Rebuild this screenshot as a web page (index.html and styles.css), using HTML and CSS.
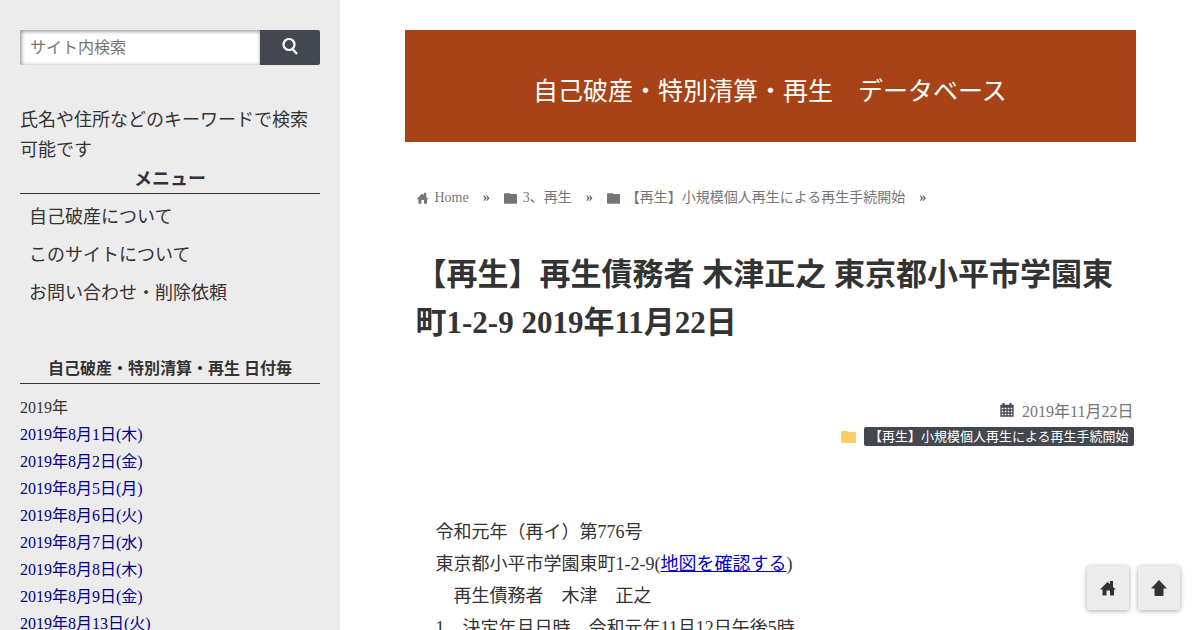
FILE: index.html
```html
<!DOCTYPE html>
<html lang="ja">
    <head>
      <meta charset="utf-8">
      <meta name="viewport" content="width=device-width, initial-scale=1">
      <title>【再生】再生債務者 木津正之</title>
      <link rel="stylesheet" href="styles.css">
    </head>
    <body>
        <svg class="sprite" aria-hidden="true">
            <symbol id="icon-home" viewBox="0 0 16 16"><path d="M7.500 2L10 4V1h3v6l3 2.500H14V15q0 .5-.5.5H10V10.500H6.500v5H3q-.5 0-.5-.5V9.500H0z"/></symbol>
            <symbol id="icon-folder" viewBox="0 0 16 14"><path d="M1 1h6l1 1h7q1 0 1 1v10q0 1-1 1H1q-1 0-1-1V2q0-1 1-1z"/></symbol>
        </svg>
        <div class="wrapper">
            <aside class="sidebar">
                <form class="search">
                    <input type="text" class="search-text" placeholder="サイト内検索" aria-label="サイト内検索">
                    <button type="submit" class="search-btn" aria-label="検索">
                        <svg viewBox="0 0 16 17"><circle cx="7" cy="6.500" r="5.500"/><path d="M10.500 11l4.500 5"/></svg>
                    </button>
                </form>
                <p class="search-note">氏名や住所などのキーワードで検索可能です</p>
                <h2 class="side-title">メニュー</h2>
                <ul class="menu">
                    <li><a href="#">自己破産について</a></li>
                    <li><a href="#">このサイトについて</a></li>
                    <li><a href="#">お問い合わせ・削除依頼</a></li>
                </ul>
                <h2 class="side-title small">自己破産・特別清算・再生 日付毎</h2>
                <p class="year">2019年</p>
                <ul class="days">
                    <li><a href="#">2019年8月1日(木)</a></li>
                    <li><a href="#">2019年8月2日(金)</a></li>
                    <li><a href="#">2019年8月5日(月)</a></li>
                    <li><a href="#">2019年8月6日(火)</a></li>
                    <li><a href="#">2019年8月7日(水)</a></li>
                    <li><a href="#">2019年8月8日(木)</a></li>
                    <li><a href="#">2019年8月9日(金)</a></li>
                    <li><a href="#">2019年8月13日(火)</a></li>
                </ul>
            </aside>
            <main class="main">
                <header class="site-header">
                    <a href="#">自己破産・特別清算・再生　データベース</a>
                </header>
                <article class="article">
                    <nav class="breadcrumb">
                        <a href="#"><svg><use href="#icon-home"/></svg>Home</a>
                        <span>»</span>
                        <a href="#"><svg><use href="#icon-folder"/></svg>3、再生</a>
                        <span>»</span>
                        <a href="#"><svg><use href="#icon-folder"/></svg>【再生】小規模個人再生による再生手続開始</a>
                        <span>»</span>
                    </nav>
                    <h1 class="title">【再生】再生債務者 木津正之 東京都小平市学園東町1-2-9 2019年11月22日</h1>
                    <div class="meta">
                        <div class="date">
                            <svg class="calendar" viewBox="0 0 14 14"><path d="M3.500 0v4M10.500 0v4" stroke-width="2"/><path d="M1 2.500h12v10.500H1zM1 4h12M1 7h12M1 10h12M4 4v9M7 4v9M10 4v9"/></svg>
                            <time datetime="2019-11-22">2019年11月22日</time>
                        </div>
                        <div class="category">
                            <svg class="folder"><use href="#icon-folder"/></svg>
                            <a href="#">【再生】小規模個人再生による再生手続開始</a>
                        </div>
                    </div>
                    <div class="content">
                        令和元年（再イ）第776号<br>
                        東京都小平市学園東町1-2-9(<a href="#">地図を確認する</a>)<br>
                        　再生債務者　木津　正之<br>
                        1　決定年月日時　令和元年11月12日午後5時
                    </div>
                </article>
            </main>
        </div>
        <div class="float-nav">
            <a href="#" aria-label="Home"><svg><use href="#icon-home"/></svg></a>
            <a href="#" aria-label="Top"><svg viewBox="0 0 16 16"><path d="M8 0l8 8.500h-3.500V15q0 1-1 1h-7q-1 0-1-1V8.500H0z"/></svg></a>
        </div>
    </body>
</html>
```
FILE: styles.css
```css
*{
    box-sizing: border-box;
}
body{
    margin: 0;
    height: 100vh;
    overflow: hidden;
    font-family: "Liberation Serif", "Noto Sans CJK JP", serif;
    font-size: 18px;
    color: #333;
    background: #fff;
}
h1,h2,p,ul{
    margin: 0;
    padding: 0;
}
ul{
    list-style: none;
}
a{
    text-decoration: none;
}
.sprite{
    display: none;
}
.wrapper{
    display: flex;
    height: 100%;
}
/* sidebar */
.sidebar{
    flex: 0 0 340px;
    padding: 30px 20px 0;
    background: #ececec;
    overflow: hidden;
}
.search{
    display: flex;
    height: 35px;
    margin-bottom: 40px;
}
.search-text{
    flex: 1;
    min-width: 0;
    padding: 0 10px;
    border: 0;
    border-radius: 2px 0 0 2px;
    background: #fff;
    box-shadow: inset 1px 1px 4px rgba(0,0,0,0.5);
    font-family: inherit;
    font-size: 16px;
}
.search-text::placeholder{
    color: #757575;
}
.search-btn{
    width: 60px;
    padding: 0;
    border: 0;
    border-radius: 0 2px 2px 0;
    background: #434750;
}
.search-btn svg{
    width: 16px;
    height: 17px;
    fill: none;
    stroke: #fff;
    stroke-width: 2.2;
}
.search-note{
    line-height: 30px;
}
.side-title{
    border-bottom: 1px solid #333;
    font-size: 18px;
    line-height: 28px;
    text-align: center;
}
.side-title.small{
    font-size: 16px;
}
.menu{
    padding: 4px 9px 0;
    margin-bottom: 43px;
}
.menu li{
    line-height: 38px;
}
.menu a{
    color: #333;
}
.year,.days{
    font-size: 16px;
    line-height: 27px;
}
.year{
    padding-top: 10px;
}
.days a{
    color: #00008b;
}
/* main */
.main{
    flex: 1;
    min-width: 0;
    padding-top: 30px;
}
.site-header,.article{
    width: 85%;
    margin: 0 auto;
}
.site-header{
    padding: 46px 0 34px;
    background: #a84317;
    font-size: 25px;
    line-height: 32px;
    text-align: center;
}
.site-header a{
    color: #fff;
}
.article{
    padding: 44px 2px 0 11px;
}
.breadcrumb{
    display: flex;
    gap: 14px;
    font-size: 14px;
    line-height: 24px;
}
.breadcrumb a{
    display: flex;
    align-items: center;
    gap: 6px;
    color: #757575;
}
.breadcrumb svg{
    width: 13px;
    height: 12px;
    fill: #757575;
}
.title{
    margin-top: 41px;
    font-size: 31px;
    line-height: 48px;
}
.meta{
    display: flex;
    flex-direction: column;
    align-items: flex-end;
    padding-top: 50px;
}
.date,.category{
    display: flex;
    align-items: center;
    gap: 8px;
    height: 26px;
}
.date{
    color: #757575;
    font-size: 16px;
}
.calendar{
    width: 14px;
    height: 14px;
    fill: none;
    stroke: #434750;
    stroke-width: 1.3;
}
.folder{
    width: 15px;
    height: 13px;
    fill: #ffcc66;
}
.category a{
    padding: 0 5px;
    border-radius: 2px;
    background: #434750;
    color: #fff;
    font-size: 13px;
    line-height: 19px;
}
.content{
    padding: 67px 20px 0;
    line-height: 32px;
}
.content a{
    color: #0000cd;
    text-decoration: underline;
}
/* floating buttons */
.float-nav{
    position: fixed;
    right: 20px;
    bottom: 20px;
    display: flex;
    gap: 9px;
}
.float-nav a{
    display: flex;
    align-items: center;
    justify-content: center;
    width: 42px;
    height: 44px;
    border-radius: 3px;
    background: #ececec;
    box-shadow: 0 1px 5px rgba(0,0,0,0.35);
}
.float-nav svg{
    width: 16px;
    height: 16px;
    fill: #333;
}
```
